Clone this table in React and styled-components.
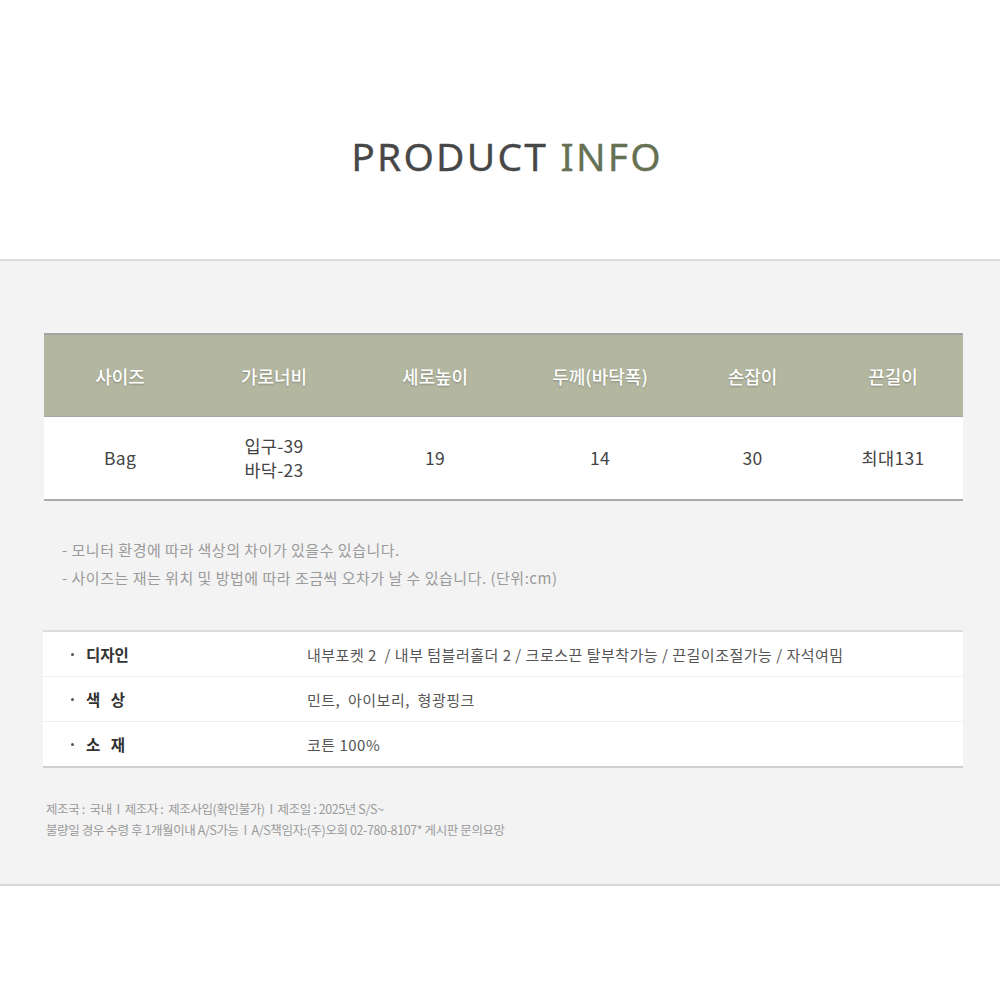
import React from "react";
import styled, { createGlobalStyle } from "styled-components";

const GlobalStyle = createGlobalStyle`
    body {
        margin: 0;
        background: #fff;
        font-family: "Noto Sans CJK KR", "Noto Sans", sans-serif;
    }
`;

const Page = styled.div`
    width: 1000px;
    min-height: 984px;
    background: #fff;
`;

const TitleWrap = styled.header`
    height: 259px;
    display: flex;
    justify-content: center;
    padding: 131px 0 0 14px;
    box-sizing: border-box;
`;

const Title = styled.h1`
    margin: 0;
    font-family: "Noto Sans", sans-serif;
    font-weight: 400;
    font-size: 39px;
    line-height: 50px;
    letter-spacing: 2.2px;
    color: #474747;
    -webkit-text-stroke: 0.3px currentColor;
`;

const Accent = styled.span`
    color: #667052;
`;

const Section = styled.section`
    background: #f3f3f3;
    border-top: 2px solid #dcdcdc;
    border-bottom: 2px solid #d8d8d8;
    padding: 72px 37px 44px 43px;
`;

const SizeTable = styled.div`
    margin-left: 1px;
    border-top: 2px solid #a3a3a3;
    border-bottom: 2px solid #aaaaaa;
`;

const Row = styled.div`
    display: grid;
    grid-template-columns: 152px 156px 166px 164px 141px 140px;
    height: ${p => p.$h}px;
    background: ${p => (p.$head ? "#b3b7a0" : "#fff")};
    border-bottom: ${p => (p.$head ? "1px solid #a6a8a0" : "none")};
`;

const Cell = styled.div`
    display: flex;
    align-items: center;
    justify-content: center;
    text-align: center;
    font-size: ${p => (p.$head ? 18 : 17.5)}px;
    line-height: 24px;
    letter-spacing: ${p => (p.$head ? 0 : 0.3)}px;
    color: ${p => (p.$head ? "#fff" : "#444")};
    font-weight: ${p => (p.$head ? 500 : 400)};
    text-shadow: ${p => (p.$head ? "0 1px 2px rgba(0,0,0,0.25)" : "none")};
`;

const Notes = styled.ul`
    list-style: none;
    margin: 35px 0 0;
    padding: 0 0 0 19px;
`;

const Note = styled.li`
    font-size: 15px;
    line-height: 28px;
    color: #9a9a9a;
    letter-spacing: 0.5px;
`;

const SpecTable = styled.div`
    margin-top: 38px;
    background: #fff;
    border-top: 2px solid #dcdcdc;
    border-bottom: 2px solid #cfcfcf;
`;

const SpecRow = styled.div`
    display: grid;
    grid-template-columns: 264px 1fr;
    align-items: center;
    height: 44px;
    border-top: ${p => (p.$first ? "none" : "1px solid #eeeeee")};
`;

const Label = styled.div`
    display: flex;
    align-items: center;
    padding-left: 28px;
    font-size: 15.5px;
    font-weight: 700;
    color: #333;
    white-space: pre;
`;

const Dot = styled.span`
    display: inline-block;
    width: 3px;
    height: 3px;
    border-radius: 50%;
    background: #555;
    margin-right: 12px;
`;

const Value = styled.div`
    font-size: 15px;
    color: #555;
    letter-spacing: 0.5px;
    white-space: pre;
`;

const Footer = styled.div`
    margin-top: 30px;
    padding-left: 3px;
    font-size: 12.5px;
    line-height: 21px;
    color: #9a9a9a;
    letter-spacing: -0.4px;
    white-space: pre;
`;

const heads = ["사이즈", "가로너비", "세로높이", "두께(바닥폭)", "손잡이", "끈길이"];

const specs = [
    ["디자인", "내부포켓 2  / 내부 텀블러홀더 2 / 크로스끈 탈부착가능 / 끈길이조절가능 / 자석여밈"],
    ["색   상", "민트,  아이보리,  형광핑크"],
    ["소   재", "코튼 100%"],
];

const App = () => (
    <Page>
        <GlobalStyle />
        <TitleWrap>
            <Title>
                PRODUCT <Accent>INFO</Accent>
            </Title>
        </TitleWrap>
        <Section>
            <SizeTable>
                <Row $head $h={81}>
                    {heads.map(h => (
                        <Cell $head key={h}>
                            {h}
                        </Cell>
                    ))}
                </Row>
                <Row $h={82}>
                    <Cell>Bag</Cell>
                    <Cell>
                        입구-39
                        <br />
                        바닥-23
                    </Cell>
                    <Cell>19</Cell>
                    <Cell>14</Cell>
                    <Cell>30</Cell>
                    <Cell>최대131</Cell>
                </Row>
            </SizeTable>
            <Notes>
                <Note>- 모니터 환경에 따라 색상의 차이가 있을수 있습니다.</Note>
                <Note>- 사이즈는 재는 위치 및 방법에 따라 조금씩 오차가 날 수 있습니다. (단위:cm)</Note>
            </Notes>
            <SpecTable>
                {specs.map(([label, value], i) => (
                    <SpecRow key={label} $first={i === 0}>
                        <Label>
                            <Dot />
                            {label}
                        </Label>
                        <Value>{value}</Value>
                    </SpecRow>
                ))}
            </SpecTable>
            <Footer>
                {"제조국 :  국내  I  제조자 :  제조사입(확인불가)  I  제조일 : 2025년 S/S~"}
                <br />
                {"불량일 경우 수령 후 1개월이내 A/S가능  I  A/S책임자:(주)오희 02-780-8107* 게시판 문의요망"}
            </Footer>
        </Section>
    </Page>
);

export default App;
